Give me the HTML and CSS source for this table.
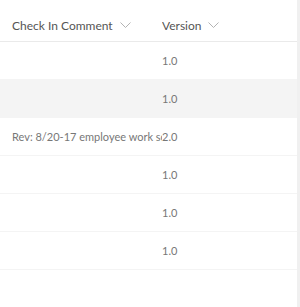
FILE: index.html
```html
<!DOCTYPE html>
<html lang="en">
<head>
  <meta charset="UTF-8">
  <meta name="viewport" content="width=device-width, initial-scale=1.0">
  <title>Documents</title>
  <link rel="stylesheet" href="styles.css">
</head>
<body>
  <div class="list-view">
    <div class="grid">
      <div class="row header">
        <div class="cell comment">Check In Comment<svg class="chevron" width="11" height="6" viewBox="0 0 11 6"><path d="M0.5 0.5 L5.5 5.5 L10.5 0.5" fill="none" stroke="#b3b3b3" stroke-width="1"/></svg></div>
        <div class="cell version">Version<svg class="chevron" width="11" height="6" viewBox="0 0 11 6"><path d="M0.5 0.5 L5.5 5.5 L10.5 0.5" fill="none" stroke="#b3b3b3" stroke-width="1"/></svg></div>
      </div>

      <div class="row">
        <div class="cell comment"></div>
        <div class="cell version">1.0</div>
      </div>
      <div class="row selected">
        <div class="cell comment"></div>
        <div class="cell version">1.0</div>
      </div>
      <div class="row">
        <div class="cell comment">Rev: 8/20-17 employee work schedule</div>
        <div class="cell version">2.0</div>
      </div>
      <div class="row">
        <div class="cell comment"></div>
        <div class="cell version">1.0</div>
      </div>
      <div class="row">
        <div class="cell comment"></div>
        <div class="cell version">1.0</div>
      </div>
      <div class="row">
        <div class="cell comment"></div>
        <div class="cell version">1.0</div>
      </div>
    </div>
    <div class="scrollbar"></div>
  </div>
</body>
</html>
```

FILE: styles.css
```css
body {
  margin: 0;
  padding: 0;
  font-family: Lato, "Open Sans", sans-serif;
  background-color: #fff;
}

.list-view {
  display: flex;
  height: 307px;
}

.grid {
  flex: 1;
  display: flex;
  flex-direction: column;
}

.scrollbar {
  width: 3px;
  background-color: #f0f0f0;
}

.row {
  display: flex;
  align-items: center;
  height: 37px;
  border-bottom: 1px solid #f4f4f4;
  font-size: 11px;
  color: #777;
}

.row.selected {
  background-color: #f4f4f4;
}

.row.header {
  height: 31px;
  padding-top: 10px;
  border-bottom: 1px solid #eaeaea;
  font-size: 12px;
  color: #555;
}

.cell {
  white-space: nowrap;
  overflow: hidden;
}

.comment {
  width: 143px;
  padding-left: 12px;
  padding-right: 7px;
}

.version {
  flex: 1;
}

.chevron {
  margin-left: 7px;
  vertical-align: 2px;
}
```
